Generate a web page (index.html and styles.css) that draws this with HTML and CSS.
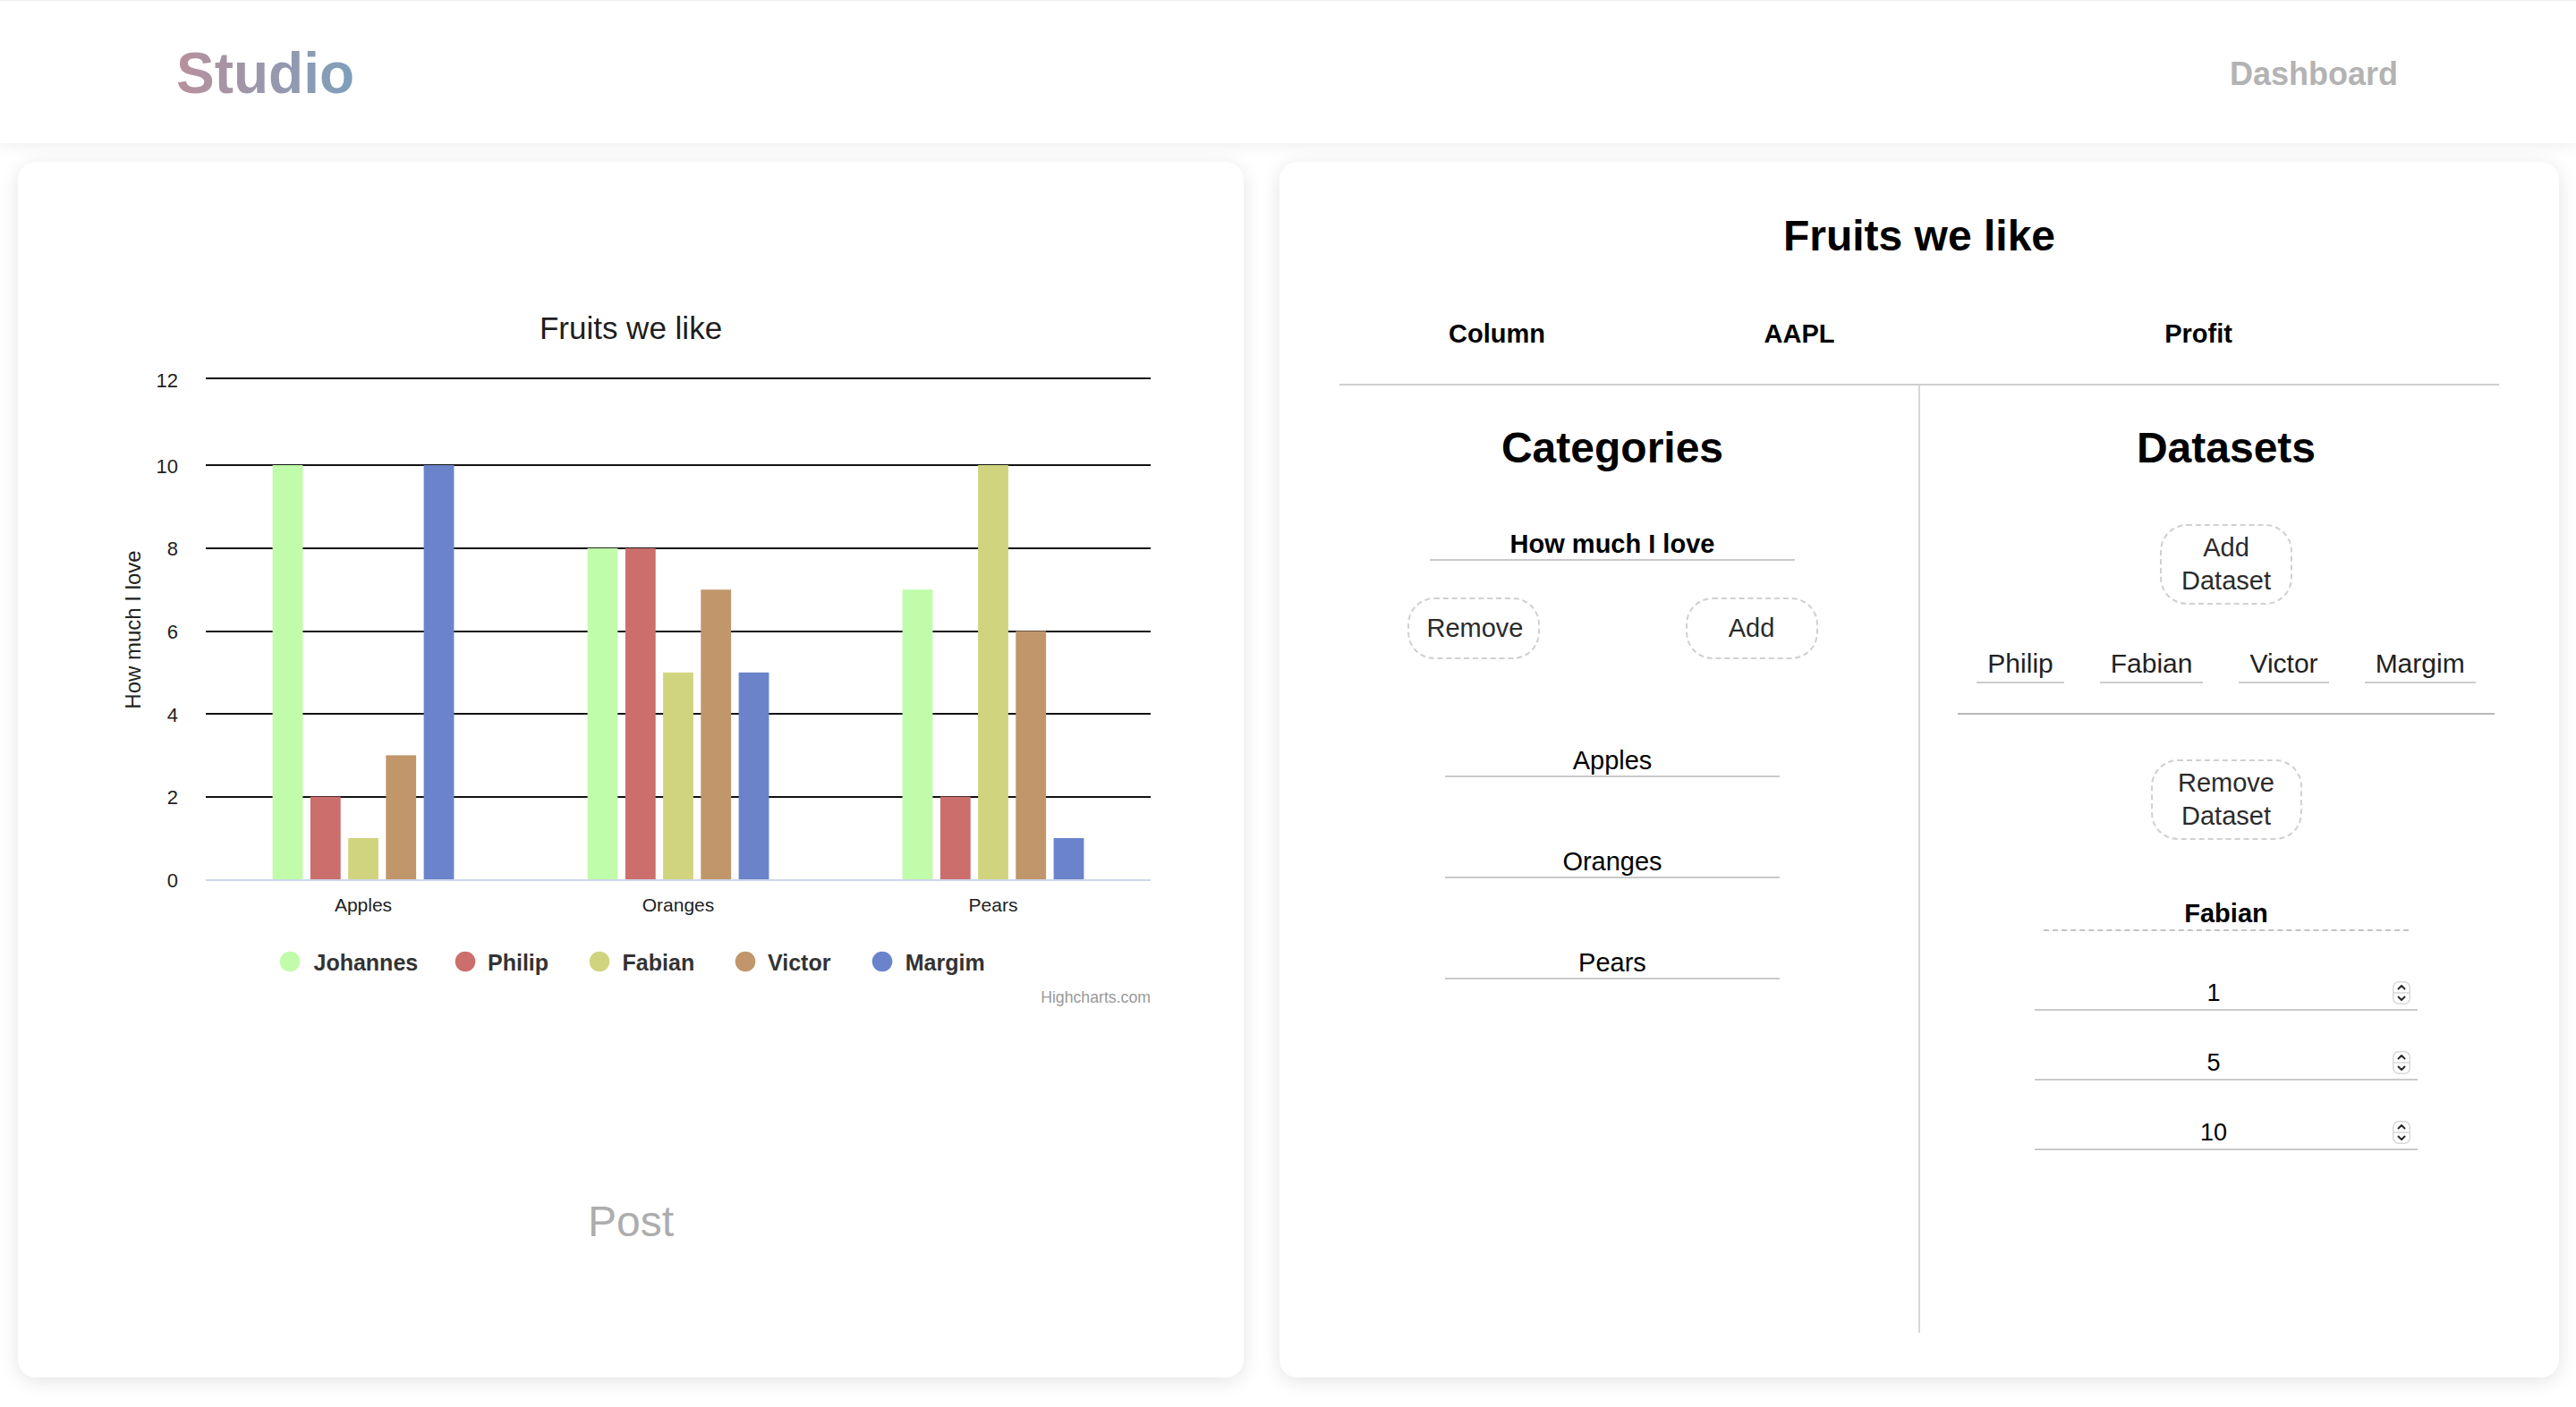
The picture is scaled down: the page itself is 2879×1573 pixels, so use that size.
FILE: index.html
```html
<!DOCTYPE html>
<html lang="en">
<head>
<meta charset="utf-8">
<title>Studio</title>
<link rel="stylesheet" href="styles.css">
</head>
<body>
<header class="topbar">
  <div class="brand">Studio</div>
  <nav class="nav"><a class="nav-link" href="#">Dashboard</a></nav>
</header>
<main class="workspace">
  <section class="card chart-card">
    <svg class="chart" viewBox="0 0 1370 980" width="1370" height="980">
      <text class="chart-title" x="685" y="197.5" text-anchor="middle">Fruits we like</text>
      <g class="gridlines">
        <line x1="210" x2="1266" y1="242" y2="242"/>
        <line x1="210" x2="1266" y1="339" y2="339"/>
        <line x1="210" x2="1266" y1="432" y2="432"/>
        <line x1="210" x2="1266" y1="525" y2="525"/>
        <line x1="210" x2="1266" y1="617" y2="617"/>
        <line x1="210" x2="1266" y1="710" y2="710"/>
      </g>
      <g class="y-labels" text-anchor="end">
        <text x="179" y="251.5">12</text>
        <text x="179" y="347.8">10</text>
        <text x="179" y="440.4">8</text>
        <text x="179" y="533">6</text>
        <text x="179" y="625.6">4</text>
        <text x="179" y="718.2">2</text>
        <text x="179" y="810.8">0</text>
      </g>
      <g class="s-johannes">
        <rect x="284.6" y="339" width="33.8" height="463.3"/>
        <rect x="636.6" y="431.9" width="33.8" height="370.4"/>
        <rect x="988.6" y="478.2" width="33.8" height="324.1"/>
      </g>
      <g class="s-philip">
        <rect x="326.9" y="709.7" width="33.8" height="92.6"/>
        <rect x="678.9" y="431.9" width="33.8" height="370.4"/>
        <rect x="1030.9" y="709.7" width="33.8" height="92.6"/>
      </g>
      <g class="s-fabian">
        <rect x="369.1" y="756" width="33.8" height="46.3"/>
        <rect x="721.1" y="570.8" width="33.8" height="231.5"/>
        <rect x="1073.1" y="339" width="33.8" height="463.3"/>
      </g>
      <g class="s-victor">
        <rect x="411.3" y="663.4" width="33.8" height="138.9"/>
        <rect x="763.3" y="478.2" width="33.8" height="324.1"/>
        <rect x="1115.3" y="524.5" width="33.8" height="277.8"/>
      </g>
      <g class="s-margim">
        <rect x="453.6" y="339" width="33.8" height="463.3"/>
        <rect x="805.6" y="570.8" width="33.8" height="231.5"/>
        <rect x="1157.6" y="756" width="33.8" height="46.3"/>
      </g>
      <line class="x-axis" x1="210" x2="1266" y1="803" y2="803"/>
      <g class="x-labels" text-anchor="middle">
        <text x="386" y="838.3">Apples</text>
        <text x="738" y="838.3">Oranges</text>
        <text x="1090" y="838.3">Pears</text>
      </g>
      <text class="y-title" transform="translate(137 523) rotate(-90)" text-anchor="middle">How much I love</text>
      <g class="legend">
        <circle class="dot-johannes" cx="304" cy="894" r="11.3"/>
        <text x="330.5" y="903.7">Johannes</text>
        <circle class="dot-philip" cx="500" cy="894" r="11.3"/>
        <text x="525" y="903.7">Philip</text>
        <circle class="dot-fabian" cx="650" cy="894" r="11.3"/>
        <text x="675.6" y="903.7">Fabian</text>
        <circle class="dot-victor" cx="813" cy="894" r="11.3"/>
        <text x="838" y="903.7">Victor</text>
        <circle class="dot-margim" cx="966" cy="894" r="11.3"/>
        <text x="991.8" y="903.7">Margim</text>
      </g>
      <text class="credits" x="1266" y="940" text-anchor="end">Highcharts.com</text>
    </svg>
    <button class="post" type="button">Post</button>
  </section>

  <section class="card editor">
    <h1 class="editor-title">Fruits we like</h1>
    <div class="options">
      <span class="option">Column</span>
      <span class="option">AAPL</span>
      <span class="option">Profit</span>
    </div>
    <div class="panes">
      <div class="pane">
        <h2 class="pane-title">Categories</h2>
        <input class="field field-bold series-field" type="text" value="How much I love">
        <div class="actions">
          <button class="btn" type="button">Remove</button>
          <button class="btn" type="button">Add</button>
        </div>
        <div class="category-list">
          <input class="field category-field" type="text" value="Apples">
          <input class="field category-field" type="text" value="Oranges">
          <input class="field category-field" type="text" value="Pears">
        </div>
      </div>
      <div class="divider"></div>
      <div class="pane">
        <h2 class="pane-title">Datasets</h2>
        <button class="btn btn-stack add-set" type="button">Add Dataset</button>
        <div class="tabs">
          <span class="tab">Philip</span>
          <span class="tab">Fabian</span>
          <span class="tab">Victor</span>
          <span class="tab">Margim</span>
        </div>
        <button class="btn btn-stack remove-set" type="button">Remove Dataset</button>
        <input class="field field-bold dataset-name" type="text" value="Fabian">
        <div class="values">
          <div class="value-row">
            <input class="value-input" type="number" value="1">
            <svg class="spinner" viewBox="0 0 20 26"><rect x="0.75" y="0.75" width="18.5" height="24.5" rx="6"/><line x1="1" y1="13" x2="19" y2="13"/><path d="M6.5 8.5 L10 5 L13.5 8.5"/><path d="M6.5 17.5 L10 21 L13.5 17.5"/></svg>
          </div>
          <div class="value-row">
            <input class="value-input" type="number" value="5">
            <svg class="spinner" viewBox="0 0 20 26"><rect x="0.75" y="0.75" width="18.5" height="24.5" rx="6"/><line x1="1" y1="13" x2="19" y2="13"/><path d="M6.5 8.5 L10 5 L13.5 8.5"/><path d="M6.5 17.5 L10 21 L13.5 17.5"/></svg>
          </div>
          <div class="value-row">
            <input class="value-input" type="number" value="10">
            <svg class="spinner" viewBox="0 0 20 26"><rect x="0.75" y="0.75" width="18.5" height="24.5" rx="6"/><line x1="1" y1="13" x2="19" y2="13"/><path d="M6.5 8.5 L10 5 L13.5 8.5"/><path d="M6.5 17.5 L10 21 L13.5 17.5"/></svg>
          </div>
        </div>
      </div>
    </div>
  </section>
</main>
</body>
</html>
```

FILE: styles.css
```css
* { box-sizing: border-box; }

html, body {
  margin: 0;
  height: 100%;
}

body {
  font-family: "Liberation Sans", Arial, Helvetica, sans-serif;
  background: #ffffff;
  color: #000;
  overflow: hidden;
}

/* ---------- top bar ---------- */
.topbar {
  height: 160px;
  border-top: 1px solid #ececec;
  display: flex;
  align-items: center;
  justify-content: space-between;
  padding: 0 199px 0 197px;
  background: #fff;
  box-shadow: 0 3px 16px rgba(0, 0, 0, 0.07);
  position: relative;
  z-index: 1;
}

.brand {
  font-size: 64px;
  font-weight: 700;
  line-height: 74px;
  padding-top: 3px;
  background: linear-gradient(90deg, #b8909c 0%, #7c9fbb 100%);
  -webkit-background-clip: text;
  background-clip: text;
  color: transparent;
}

.nav-link {
  display: block;
  font-size: 36px;
  font-weight: 700;
  line-height: 42px;
  padding-top: 4px;
  color: #b3b3b3;
  text-decoration: none;
}

/* ---------- workspace ---------- */
.workspace {
  height: calc(100vh - 160px);
  padding: 21px 19px 33px 20px;
  display: grid;
  grid-template-columns: 1370fr 1430fr;
  column-gap: 40px;
}

.card {
  background: #fff;
  border-radius: 20px;
  box-shadow: 0 4px 22px rgba(0, 0, 0, 0.11);
  min-height: 0;
}

/* ---------- chart card ---------- */
.chart-card {
  display: flex;
  flex-direction: column;
  align-items: center;
  overflow: hidden;
}

.chart {
  display: block;
  width: 1370px;
  height: 980px;
  font-family: "Liberation Sans", Arial, sans-serif;
}

.chart-title { font-size: 35px; fill: #1e1e1e; }
.gridlines line { stroke: #111; stroke-width: 2; shape-rendering: crispEdges; }
.y-labels text { font-size: 22px; fill: #222; }
.x-labels text { font-size: 21px; fill: #222; }
.y-title { font-size: 24px; fill: #222; }
.x-axis { stroke: #ccd6eb; stroke-width: 2; shape-rendering: crispEdges; }
.legend text { font-size: 25px; font-weight: 700; fill: #333; }
.credits { font-size: 17.7px; fill: #999; }

.s-johannes rect, .dot-johannes { fill: #c0fcaa; }
.s-philip rect, .dot-philip { fill: #cb6e6c; }
.s-fabian rect, .dot-fabian { fill: #d1d47e; }
.s-victor rect, .dot-victor { fill: #c1966a; }
.s-margim rect, .dot-margim { fill: #6b83cb; }

.post {
  margin-top: 177px;
  padding: 0;
  border: 0;
  background: none;
  font-family: "Liberation Sans", Arial, sans-serif;
  font-size: 48px;
  line-height: 56px;
  color: #adadad;
}

/* ---------- editor card ---------- */
.editor {
  display: flex;
  flex-direction: column;
  padding: 55px 67px 50px 67px;
}

.editor-title {
  margin: 0;
  font-size: 48px;
  line-height: 56px;
  font-weight: 700;
  text-align: center;
}

.options {
  margin-top: 64px;
  display: flex;
  padding-bottom: 39px;
  border-bottom: 2px solid #cfcfcf;
}

.option {
  font-size: 29px;
  line-height: 34px;
  font-weight: 700;
  text-align: center;
}
.option:nth-child(1) { width: 352px; }
.option:nth-child(2) { width: 324px; }
.option:nth-child(3) { width: 568px; }

.panes {
  flex: 1;
  display: grid;
  grid-template-columns: 1fr 2px 1fr;
  column-gap: 37px;
}

.divider { background: #d6d6d6; }

.pane {
  display: flex;
  flex-direction: column;
  align-items: center;
}

.pane-title {
  margin: 42px 0 0;
  font-size: 48px;
  line-height: 56px;
  font-weight: 700;
}

.field {
  display: block;
  height: 36px;
  padding: 0;
  border: 0;
  border-bottom: 2px solid #c9c9c9;
  border-radius: 0;
  background: transparent;
  font-family: "Liberation Sans", Arial, sans-serif;
  font-size: 29px;
  line-height: 34px;
  color: #000;
  text-align: center;
  outline: none;
}

.field-bold { font-weight: 700; }

.series-field {
  width: 408px;
  margin-top: 62px;
}

.actions {
  margin-top: 41px;
  width: 100%;
  display: flex;
  justify-content: center;
  gap: 163px;
}

.btn {
  width: 148px;
  padding: 14px 20px;
  border: 2px dashed #d0d0d0;
  border-radius: 30px;
  background: #fff;
  font-family: "Liberation Sans", Arial, sans-serif;
  font-size: 29px;
  line-height: 37px;
  color: #2b2b2b;
  text-align: center;
}

.btn-stack { padding-top: 6px; padding-bottom: 6px; }

.category-list {
  margin-top: 96px;
  display: flex;
  flex-direction: column;
  align-items: center;
  gap: 77px;
}

.category-field { width: 374px; }

.add-set { margin-top: 57px; }

.tabs {
  margin-top: 49px;
  width: calc(100% - 10px);
  display: flex;
  justify-content: center;
  gap: 40px;
  padding-bottom: 33px;
  border-bottom: 2px solid #b8b8b8;
}

.tab {
  font-size: 30px;
  line-height: 34px;
  padding: 0 12px 3px;
  border-bottom: 2px solid #cdcdcd;
  color: #222;
}

.remove-set {
  width: 169px;
  margin-top: 50px;
  padding-left: 26px;
  padding-right: 26px;
}

.dataset-name {
  width: 408px;
  height: 37px;
  margin-top: 65px;
  padding-bottom: 1px;
  border-bottom: 2px dashed #c4c4c4;
}

.values {
  margin-top: 53px;
  display: flex;
  flex-direction: column;
  gap: 42.5px;
}

.value-row {
  width: 428px;
  display: flex;
  align-items: center;
  padding-bottom: 1.5px;
  border-bottom: 2px solid #c9c9c9;
}

.value-input {
  flex: 1;
  min-width: 0;
  height: 32px;
  padding: 0;
  border: 0;
  background: transparent;
  font-family: "Liberation Sans", Arial, sans-serif;
  font-size: 27px;
  line-height: 32px;
  color: #000;
  text-align: center;
  outline: none;
  -moz-appearance: textfield;
}

.value-input::-webkit-inner-spin-button,
.value-input::-webkit-outer-spin-button {
  -webkit-appearance: none;
  margin: 0;
}

.spinner {
  width: 20px;
  height: 26px;
  margin-right: 8px;
  flex: none;
}
.spinner rect { fill: #fff; stroke: #d8d8d8; stroke-width: 1.5; }
.spinner line { stroke: #d8d8d8; stroke-width: 1.5; }
.spinner path { fill: none; stroke: #2a2a2a; stroke-width: 2; stroke-linecap: round; stroke-linejoin: round; }
```
